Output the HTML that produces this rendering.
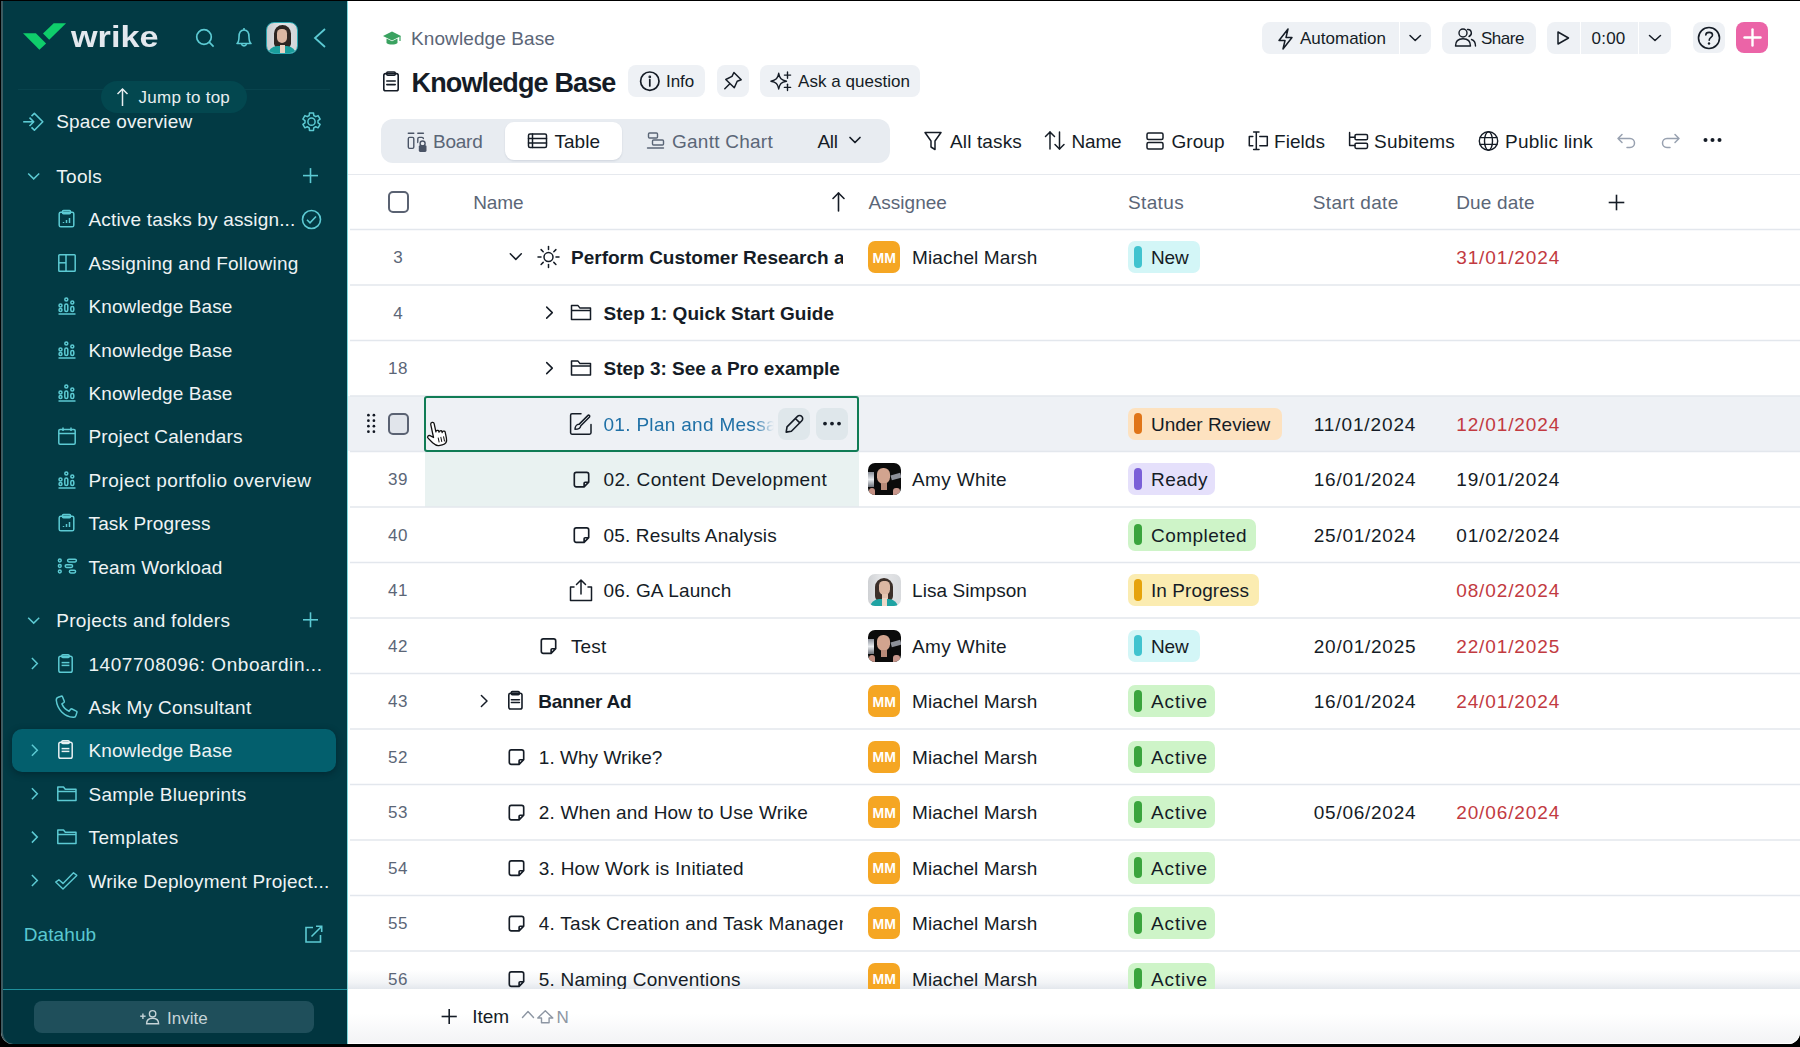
<!DOCTYPE html><html><head><meta charset="utf-8"><style>
*{box-sizing:border-box}
html,body{margin:0;padding:0;width:1800px;height:1047px;overflow:hidden;background:#000;font-family:"Liberation Sans",sans-serif}
.t{position:absolute;line-height:1;white-space:nowrap}
.a{position:absolute}
svg{position:absolute;overflow:visible}
</style></head><body><div class="a" style="left:1px;top:1px;width:1799px;height:1043px;background:#fff;border-radius:0 0 12px 12px;overflow:hidden"></div><div class="a" style="left:1px;top:1px;width:347px;height:1043px;background:#023a44;border-radius:0 0 0 12px;border-left:2px solid #3d5a60"></div><div class="a" style="left:347px;top:1px;width:1px;height:1043px;background:#7fd6dc"></div><svg width="1800" height="1047" style="left:0;top:0"><polygon points="23,33.3 35.9,33.3 46.1,43.6 39.4,49.8" fill="#0fce6b"/><polygon points="43,33.6 53.7,23.2 66.1,23.2 49.2,39.8" fill="#0fce6b"/></svg><div class="t" style="left:71px;top:22.5px;font-size:29px;font-weight:bold;color:#e3e8ee;letter-spacing:0px;transform:scaleX(1.18);transform-origin:0 0">wrike</div><svg width="1800" height="1047" style="left:0;top:0"><g fill="none" stroke="#5ccad3" stroke-width="1.7"><circle cx="204" cy="37" r="7.3"/><line x1="209.2" y1="42.2" x2="213.6" y2="46.6"/></g></svg><svg width="1800" height="1047" style="left:0;top:0"><g fill="none" stroke="#5ccad3" stroke-width="1.6" stroke-linejoin="round"><path d="M237,43.5 L237,43.5 C238.8,42 239,40 239,37 C239,32.5 241,30 244,30 C247,30 249,32.5 249,37 C249,40 249.2,42 251,43.5 Z"/><path d="M241.5,44 a2.6,2.6 0 0 0 5,0"/><line x1="244" y1="28" x2="244" y2="30"/></g></svg><div class="a" style="left:266px;top:21.5px;width:31.5px;height:32.5px;border-radius:8px;border:1.5px solid #2aa7b1;background:linear-gradient(90deg,#c9cbce,#e4e5e7 45%,#d3d5d8);overflow:hidden"><div class="a" style="left:6.5px;top:2.5px;width:17px;height:24px;border-radius:9px 9px 6px 6px;background:#2e2622"></div><div class="a" style="left:10px;top:6px;width:10px;height:14px;border-radius:5px 5px 6px 6px;background:#dcb7a2"></div><div class="a" style="left:1px;top:23px;width:28px;height:9px;border-radius:9px 9px 0 0;background:#1a9e9c"></div><div class="a" style="left:12.5px;top:22.5px;width:5px;height:9px;background:#ead3c3"></div></div><svg width="1800" height="1047" style="left:0;top:0"><polyline points="325,29 315,38 325,47" fill="none" stroke="#5ccad3" stroke-width="1.8"/></svg><div class="a" style="left:18px;top:89px;width:312px;height:1px;background:#08434d"></div><div class="a" style="left:101px;top:81px;width:146px;height:32px;border-radius:16px;background:#03474f"></div><svg width="1800" height="1047" style="left:0;top:0"><g fill="none" stroke="#e8eef0" stroke-width="1.5"><line x1="122.5" y1="89" x2="122.5" y2="106"/><polyline points="117.5,94 122.5,89 127.5,94"/></g></svg><div class="t" style="left:138.6px;top:88.6px;font-size:17px;color:#e8eef0;letter-spacing:0.24px;">Jump to top</div><svg width="1800" height="1047" style="left:0;top:0"><g fill="none" stroke="#5ccad3" stroke-width="1.6" stroke-linejoin="round"><path d="M31.5,116.2 L34.4,113.4 L42.8,121.8 L34.4,130.2 L31.5,127.4"/><line x1="23.2" y1="121.8" x2="33.5" y2="121.8"/><polyline points="29.5,117.6 33.7,121.8 29.5,126"/></g></svg><div class="t" style="left:56.2px;top:112.3px;font-size:19px;color:#eef3f4;letter-spacing:0.14px;">Space overview</div><svg width="1800" height="1047" style="left:0;top:0"><g fill="none" stroke="#5ccad3" stroke-width="1.5" stroke-linejoin="round"><circle cx="311.5" cy="121.7" r="3.6"/><path d="M309.24,115.50 L309.48,112.93 L313.52,112.93 L313.76,115.50 L315.74,116.64 L318.08,115.56 L320.11,119.07 L318.00,120.55 L318.00,122.85 L320.11,124.33 L318.08,127.84 L315.74,126.76 L313.76,127.90 L313.52,130.47 L309.48,130.47 L309.24,127.90 L307.26,126.76 L304.92,127.84 L302.89,124.33 L305.00,122.85 L305.00,120.55 L302.89,119.07 L304.92,115.56 L307.26,116.64 Z"/></g></svg><svg width="1800" height="1047" style="left:0;top:0"><polyline points="28.2,173.5 33.7,178.9 39.2,173.5" fill="none" stroke="#5ccad3" stroke-width="1.5"/></svg><div class="t" style="left:56.2px;top:166.6px;font-size:19px;color:#eef3f4;letter-spacing:0.33px;">Tools</div><svg width="1800" height="1047" style="left:0;top:0"><g stroke="#5ccad3" stroke-width="1.6"><line x1="303.0" y1="175.6" x2="318.0" y2="175.6"/><line x1="310.5" y1="168.1" x2="310.5" y2="183.1"/></g></svg><svg width="20" height="20" style="left:57.5px;top:210.3px"><g fill="none" stroke="#5ccad3" stroke-width="1.5"><rect x="1.2" y="2.2" width="14.6" height="14.6" rx="1.6"/><rect x="4.5" y="0.6" width="8" height="3.2" rx="1"/><line x1="5.5" y1="13" x2="5.5" y2="12"/><line x1="8.5" y1="13" x2="8.5" y2="10"/><line x1="11.5" y1="13" x2="11.5" y2="8"/></g></svg><div class="t" style="left:88.5px;top:210.3px;font-size:19px;color:#eef3f4;letter-spacing:0.17px;">Active tasks by assign...</div><svg width="20" height="20" style="left:57.5px;top:253.7px"><g fill="none" stroke="#5ccad3" stroke-width="1.5"><rect x="0.8" y="0.8" width="16.4" height="16.4" rx="0.8"/><line x1="8" y1="0.8" x2="8" y2="17.2"/><line x1="0.8" y1="8.8" x2="8" y2="8.8"/></g></svg><div class="t" style="left:88.5px;top:253.7px;font-size:19px;color:#eef3f4;letter-spacing:0.22px;">Assigning and Following</div><svg width="20" height="20" style="left:57.5px;top:297.1px"><g fill="none" stroke="#5ccad3" stroke-width="1.5"><circle cx="2.5" cy="8.5" r="1.5"/><circle cx="2.5" cy="13" r="1.5"/><rect x="6.8" y="7" width="3" height="7.5" rx="1.5"/><circle cx="8.3" cy="2.5" r="1.5"/><rect x="12.8" y="9.5" width="3" height="5" rx="1.5"/><circle cx="14.3" cy="5.5" r="1.5"/><line x1="0.5" y1="17" x2="17.5" y2="17"/></g></svg><div class="t" style="left:88.5px;top:297.1px;font-size:19px;color:#eef3f4;letter-spacing:0.10px;">Knowledge Base</div><svg width="20" height="20" style="left:57.5px;top:340.5px"><g fill="none" stroke="#5ccad3" stroke-width="1.5"><circle cx="2.5" cy="8.5" r="1.5"/><circle cx="2.5" cy="13" r="1.5"/><rect x="6.8" y="7" width="3" height="7.5" rx="1.5"/><circle cx="8.3" cy="2.5" r="1.5"/><rect x="12.8" y="9.5" width="3" height="5" rx="1.5"/><circle cx="14.3" cy="5.5" r="1.5"/><line x1="0.5" y1="17" x2="17.5" y2="17"/></g></svg><div class="t" style="left:88.5px;top:340.5px;font-size:19px;color:#eef3f4;letter-spacing:0.10px;">Knowledge Base</div><svg width="20" height="20" style="left:57.5px;top:383.9px"><g fill="none" stroke="#5ccad3" stroke-width="1.5"><circle cx="2.5" cy="8.5" r="1.5"/><circle cx="2.5" cy="13" r="1.5"/><rect x="6.8" y="7" width="3" height="7.5" rx="1.5"/><circle cx="8.3" cy="2.5" r="1.5"/><rect x="12.8" y="9.5" width="3" height="5" rx="1.5"/><circle cx="14.3" cy="5.5" r="1.5"/><line x1="0.5" y1="17" x2="17.5" y2="17"/></g></svg><div class="t" style="left:88.5px;top:383.9px;font-size:19px;color:#eef3f4;letter-spacing:0.10px;">Knowledge Base</div><svg width="20" height="20" style="left:57.5px;top:427.3px"><g fill="none" stroke="#5ccad3" stroke-width="1.5"><rect x="0.8" y="2.5" width="16.4" height="14.7" rx="1.2"/><line x1="0.8" y1="6.5" x2="17.2" y2="6.5"/><line x1="5" y1="0.5" x2="5" y2="4"/><line x1="13" y1="0.5" x2="13" y2="4"/></g></svg><div class="t" style="left:88.5px;top:427.3px;font-size:19px;color:#eef3f4;letter-spacing:0.18px;">Project Calendars</div><svg width="20" height="20" style="left:57.5px;top:470.7px"><g fill="none" stroke="#5ccad3" stroke-width="1.5"><circle cx="2.5" cy="8.5" r="1.5"/><circle cx="2.5" cy="13" r="1.5"/><rect x="6.8" y="7" width="3" height="7.5" rx="1.5"/><circle cx="8.3" cy="2.5" r="1.5"/><rect x="12.8" y="9.5" width="3" height="5" rx="1.5"/><circle cx="14.3" cy="5.5" r="1.5"/><line x1="0.5" y1="17" x2="17.5" y2="17"/></g></svg><div class="t" style="left:88.5px;top:470.7px;font-size:19px;color:#eef3f4;letter-spacing:0.41px;">Project portfolio overview</div><svg width="20" height="20" style="left:57.5px;top:514.1px"><g fill="none" stroke="#5ccad3" stroke-width="1.5"><rect x="1.2" y="2.2" width="14.6" height="14.6" rx="1.6"/><rect x="4.5" y="0.6" width="8" height="3.2" rx="1"/><line x1="5.5" y1="13" x2="5.5" y2="12"/><line x1="8.5" y1="13" x2="8.5" y2="10"/><line x1="11.5" y1="13" x2="11.5" y2="8"/></g></svg><div class="t" style="left:88.5px;top:514.1px;font-size:19px;color:#eef3f4;letter-spacing:0.13px;">Task Progress</div><svg width="20" height="20" style="left:57.5px;top:557.5px"><g fill="none" stroke="#5ccad3" stroke-width="1.5"><circle cx="1.8" cy="2.5" r="1.4"/><circle cx="1.8" cy="8" r="1.4"/><circle cx="1.8" cy="13.5" r="1.4"/><rect x="9.6" y="1.2" width="8.8" height="2.7" rx="1.35"/><rect x="7.2" y="6.7" width="7.4" height="2.7" rx="1.35"/><rect x="11.4" y="12.2" width="6.2" height="2.7" rx="1.35"/></g></svg><div class="t" style="left:88.5px;top:557.5px;font-size:19px;color:#eef3f4;letter-spacing:0.18px;">Team Workload</div><svg width="1800" height="1047" style="left:0;top:0"><g fill="none" stroke="#5ccad3" stroke-width="1.6"><circle cx="311.5" cy="219.5" r="9"/><polyline points="307,219.8 310,222.8 316,216.5"/></g></svg><svg width="1800" height="1047" style="left:0;top:0"><polyline points="28.2,617.7 33.7,623.1 39.2,617.7" fill="none" stroke="#5ccad3" stroke-width="1.5"/></svg><div class="t" style="left:56.2px;top:611.0px;font-size:19px;color:#eef3f4;letter-spacing:0.31px;">Projects and folders</div><svg width="1800" height="1047" style="left:0;top:0"><g stroke="#5ccad3" stroke-width="1.6"><line x1="303.0" y1="619.8" x2="318.0" y2="619.8"/><line x1="310.5" y1="612.3" x2="310.5" y2="627.3"/></g></svg><div class="a" style="left:12px;top:729px;width:324px;height:43px;border-radius:10px;background:#035f6d;box-shadow:0 2px 7px rgba(0,20,26,.45)"></div><svg width="1800" height="1047" style="left:0;top:0"><polyline points="31.9,658.0 37.3,663.5 31.9,669.0" fill="none" stroke="#5ccad3" stroke-width="1.5"/></svg><svg width="20" height="20" style="left:57.0px;top:653.5px"><g fill="none" stroke="#5ccad3" stroke-width="1.5"><rect x="1.8" y="2.2" width="13.4" height="16" rx="1.8"/><rect x="4.8" y="0.8" width="7.4" height="2.8" rx="1"/><line x1="4.6" y1="8.6" x2="12.4" y2="8.6"/><line x1="4.6" y1="11.4" x2="12.4" y2="11.4"/></g></svg><div class="t" style="left:88.5px;top:654.5px;font-size:19px;color:#eef3f4;letter-spacing:0.55px;">1407708096: Onboardin...</div><svg width="20" height="20" style="left:55.8px;top:696.3px"><g fill="none" stroke="#5ccad3" stroke-width="1.5"><path d="M2.2,1.2 L5.2,0.2 C5.8,0 6.3,0.3 6.5,0.8 L8.3,5.2 C8.5,5.7 8.3,6.2 7.9,6.5 L5.9,7.9 C7.3,11.3 9.6,13.7 13.1,15.2 L14.6,13.3 C14.9,12.9 15.5,12.8 16,13 L20.3,15.1 C20.8,15.3 21.1,15.9 20.9,16.4 L20,19.4 C19.7,20.6 18.6,21.5 17.3,21.3 C8.2,20.5 1.2,13.4 0.3,4.3 C0.2,2.9 0.9,1.6 2.2,1.2 Z" stroke-linejoin="round"/></g></svg><div class="t" style="left:88.5px;top:697.9px;font-size:19px;color:#eef3f4;letter-spacing:0.27px;">Ask My Consultant</div><svg width="1800" height="1047" style="left:0;top:0"><polyline points="31.9,744.8 37.3,750.3 31.9,755.8" fill="none" stroke="#5ccad3" stroke-width="1.5"/></svg><svg width="20" height="20" style="left:57px;top:740.3px"><g fill="none" stroke="#e8f0f2" stroke-width="1.5"><rect x="1.8" y="2.2" width="13.4" height="16" rx="1.8"/><rect x="4.8" y="0.8" width="7.4" height="2.8" rx="1"/><line x1="4.6" y1="8.6" x2="12.4" y2="8.6"/><line x1="4.6" y1="11.4" x2="12.4" y2="11.4"/></g></svg><div class="t" style="left:88.5px;top:741.3px;font-size:19px;color:#eef3f4;letter-spacing:0.10px;">Knowledge Base</div><svg width="1800" height="1047" style="left:0;top:0"><polyline points="31.9,788.2 37.3,793.7 31.9,799.2" fill="none" stroke="#5ccad3" stroke-width="1.5"/></svg><svg width="20" height="20" style="left:57.0px;top:784.7px"><g fill="none" stroke="#5ccad3" stroke-width="1.5"><path d="M0.8 2 L6.5 2 L8.3 4.3 L19 4.3 L19 15.5 L0.8 15.5 Z" stroke-linejoin="round"/><line x1="0.8" y1="6.5" x2="19" y2="6.5"/></g></svg><div class="t" style="left:88.5px;top:784.7px;font-size:19px;color:#eef3f4;letter-spacing:0.23px;">Sample Blueprints</div><svg width="1800" height="1047" style="left:0;top:0"><polyline points="31.9,831.6 37.3,837.1 31.9,842.6" fill="none" stroke="#5ccad3" stroke-width="1.5"/></svg><svg width="20" height="20" style="left:57.0px;top:828.1px"><g fill="none" stroke="#5ccad3" stroke-width="1.5"><path d="M0.8 2 L6.5 2 L8.3 4.3 L19 4.3 L19 15.5 L0.8 15.5 Z" stroke-linejoin="round"/><line x1="0.8" y1="6.5" x2="19" y2="6.5"/></g></svg><div class="t" style="left:88.5px;top:828.1px;font-size:19px;color:#eef3f4;letter-spacing:0.38px;">Templates</div><svg width="1800" height="1047" style="left:0;top:0"><polyline points="31.9,875.0 37.3,880.5 31.9,886.0" fill="none" stroke="#5ccad3" stroke-width="1.5"/></svg><svg width="20" height="20" style="left:57.0px;top:871.5px"><g fill="none" stroke="#5ccad3" stroke-width="1.5"><polygon points="-1.3,10.1 1.9,7.8 6,11.4 16.5,0.7 19.8,3.4 6,16.9" stroke-width="1.4" stroke-linejoin="round"/></g></svg><div class="t" style="left:88.5px;top:871.5px;font-size:19px;color:#eef3f4;letter-spacing:0.22px;">Wrike Deployment Project...</div><div class="t" style="left:23.7px;top:925.1px;font-size:19px;color:#5ac8d1;letter-spacing:0.10px;">Datahub</div><svg width="1800" height="1047" style="left:0;top:0"><g fill="none" stroke="#5ccad3" stroke-width="1.6"><path d="M313,927.5 L306,927.5 L306,942 L320.5,942 L320.5,935"/><line x1="311.5" y1="936.5" x2="321.5" y2="926.5"/><polyline points="316,926.3 321.7,926.3 321.7,932"/></g></svg><div class="a" style="left:3px;top:988.5px;width:344px;height:1px;background:#1f8f9b"></div><div class="a" style="left:3px;top:989.5px;width:344px;height:53.5px;background:#01353f;border-radius:0 0 0 12px"></div><div class="a" style="left:34px;top:1001px;width:280px;height:32px;border-radius:8px;background:#1f4f5b"></div><svg width="1800" height="1047" style="left:0;top:0"><g fill="none" stroke="#c6d4d8" stroke-width="1.4"><circle cx="152.6" cy="1013.8" r="3.2"/><path d="M146.6,1023.8 C146.6,1019.6 149.2,1018.2 152.6,1018.2 C156,1018.2 158.6,1019.6 158.6,1023.8 Z"/><line x1="140.2" y1="1016.2" x2="145.6" y2="1016.2"/><line x1="142.9" y1="1013.5" x2="142.9" y2="1018.9"/></g></svg><div class="t" style="left:167.0px;top:1009.5px;font-size:17px;color:#c6d4d8;letter-spacing:0.03px;">Invite</div><svg width="1800" height="1047" style="left:0;top:0"><path d="M383,36 L392,31.5 L401,36 L392,40.5 Z" fill="#3aa260"/><path d="M386.5,38.5 L386.5,43 C389,45 395,45 397.5,43 L397.5,38.5 L392,41.3 Z" fill="#3aa260"/><line x1="400" y1="36" x2="400" y2="41" stroke="#3aa260" stroke-width="1.2"/></svg><div class="t" style="left:411.0px;top:29.0px;font-size:19px;color:#5b6677;letter-spacing:0.10px;">Knowledge Base</div><svg width="1800" height="1047" style="left:0;top:0"><g fill="none" stroke="#151c26" stroke-width="1.6" stroke-linecap="round" stroke-linejoin="round" ><path d="M385.6,73.6 H396.4 Q398.2,73.6 398.2,75.4 V89 Q398.2,90.8 396.4,90.8 H385.6 Q383.8,90.8 383.8,89 V75.4 Q383.8,73.6 385.6,73.6 Z"/><rect x="386.8" y="72" width="8.4" height="3.2" rx="1"/><line x1="386.8" y1="81" x2="395.2" y2="81"/><line x1="386.8" y1="84.6" x2="395.2" y2="84.6"/></g></svg><div class="t" style="left:411.5px;top:69.5px;font-size:27px;color:#151c26;font-weight:bold;letter-spacing:-0.86px;">Knowledge Base</div><div class="a" style="left:628.0px;top:65.0px;width:77.0px;height:32.0px;background:#eef1f5;border-radius:8px;"></div><svg width="1800" height="1047" style="left:0;top:0"><g fill="none" stroke="#151c26" stroke-width="1.7" stroke-linecap="round" stroke-linejoin="round" ><circle cx="649.8" cy="81.2" r="9.2"/><line x1="649.8" y1="79.6" x2="649.8" y2="86"/><circle cx="649.8" cy="76.9" r="0.5" fill="#151c26"/></g></svg><div class="t" style="left:666.0px;top:73.0px;font-size:17px;color:#151c26;letter-spacing:-0.09px;">Info</div><div class="a" style="left:717.0px;top:65.0px;width:32.0px;height:32.0px;background:#eef1f5;border-radius:8px;"></div><svg width="1800" height="1047" style="left:0;top:0"><g fill="none" stroke="#151c26" stroke-width="1.5" stroke-linecap="round" stroke-linejoin="round" ><path d="M733.9,72.5 L741.2,79.8 L737.2,81.3 L734.3,87.8 L725.8,79.5 L732,76.3 Z M729.6,84 L724.8,88.8"/></g></svg><div class="a" style="left:760.0px;top:65.0px;width:160.0px;height:32.0px;background:#eef1f5;border-radius:8px;"></div><svg width="1800" height="1047" style="left:0;top:0"><g fill="none" stroke="#151c26" stroke-width="1.4" stroke-linecap="round" stroke-linejoin="round" ><path d="M778.7,73.3 C779.6,78.5 781.3,80.3 786.5,81.2 C781.3,82.1 779.6,83.9 778.7,89 C777.8,83.9 776.1,82.1 770.9,81.2 C776.1,80.3 777.8,78.5 778.7,73.3 Z"/><line x1="787.5" y1="72" x2="787.5" y2="78.2"/><line x1="784.4" y1="75.1" x2="790.6" y2="75.1"/><line x1="787.5" y1="84.3" x2="787.5" y2="90.5"/><line x1="784.4" y1="87.4" x2="790.6" y2="87.4"/></g></svg><div class="t" style="left:798.0px;top:73.0px;font-size:17px;color:#151c26;letter-spacing:0.04px;">Ask a question</div><div class="a" style="left:1262.0px;top:22.0px;width:169.0px;height:32.0px;background:#eef1f5;border-radius:8px;"></div><div class="a" style="left:1399.0px;top:22.0px;width:1.2px;height:32.0px;background:#ffffff;border-radius:0px;"></div><svg width="1800" height="1047" style="left:0;top:0"><g fill="none" stroke="#151c26" stroke-width="1.5" stroke-linecap="round" stroke-linejoin="round" ><path d="M1288,29 L1279,40.5 L1285,40.5 L1283,49 L1292,37.5 L1286,37.5 Z"/></g></svg><div class="t" style="left:1300.0px;top:30.0px;font-size:17px;color:#151c26;letter-spacing:0.00px;">Automation</div><svg width="1800" height="1047" style="left:0;top:0"><g fill="none" stroke="#151c26" stroke-width="1.5" stroke-linecap="round" stroke-linejoin="round" ><polyline points="1410,35.5 1415.2,40.5 1420.5,35.5"/></g></svg><div class="a" style="left:1442.0px;top:22.0px;width:94.0px;height:32.0px;background:#eef1f5;border-radius:8px;"></div><svg width="1800" height="1047" style="left:0;top:0"><g fill="none" stroke="#151c26" stroke-width="1.4" stroke-linecap="round" stroke-linejoin="round" ><circle cx="1463" cy="33" r="4"/><path d="M1455.5,46 C1455.5,41 1458.5,38.8 1463,38.8 C1467.5,38.8 1470.5,41 1470.5,46 Z"/><path d="M1467.5,29.5 C1471.5,29 1473,34.5 1469,36.5 M1471.5,39.5 C1474.5,40.5 1475.5,43 1475.5,46"/></g></svg><div class="t" style="left:1481.0px;top:30.0px;font-size:17px;color:#151c26;letter-spacing:-0.47px;">Share</div><div class="a" style="left:1547.0px;top:22.0px;width:124.0px;height:32.0px;background:#eef1f5;border-radius:8px;"></div><div class="a" style="left:1580.0px;top:22.0px;width:1.2px;height:32.0px;background:#ffffff;border-radius:0px;"></div><div class="a" style="left:1638.0px;top:22.0px;width:1.2px;height:32.0px;background:#ffffff;border-radius:0px;"></div><svg width="1800" height="1047" style="left:0;top:0"><g fill="none" stroke="#151c26" stroke-width="1.5" stroke-linecap="round" stroke-linejoin="round" ><path d="M1558,32 L1568.5,38 L1558,44 Z"/></g></svg><div class="t" style="left:1591.5px;top:30.0px;font-size:17px;color:#151c26;letter-spacing:0.23px;">0:00</div><svg width="1800" height="1047" style="left:0;top:0"><g fill="none" stroke="#151c26" stroke-width="1.5" stroke-linecap="round" stroke-linejoin="round" ><polyline points="1649.5,35.5 1655,40.5 1660.5,35.5"/></g></svg><div class="a" style="left:1693.0px;top:22.0px;width:32.0px;height:31.0px;background:#eef1f5;border-radius:8px;"></div><svg width="1800" height="1047" style="left:0;top:0"><g fill="none" stroke="#151c26" stroke-width="1.6" stroke-linecap="round" stroke-linejoin="round" ><circle cx="1709" cy="38" r="10.5"/><path d="M1705.8,35 C1705.8,31.5 1712.5,31.5 1712.5,35 C1712.5,37.5 1709.2,37.5 1709.2,40.3"/></g></svg><svg width="1800" height="1047" style="left:0;top:0"><circle cx="1709" cy="43.5" r="1.2" fill="#151c26"/></svg><div class="a" style="left:1736.0px;top:22.0px;width:32.0px;height:31.0px;background:#eb64a7;border-radius:8px;"></div><svg width="1800" height="1047" style="left:0;top:0"><g fill="none" stroke="#ffffff" stroke-width="2.4" stroke-linecap="round" stroke-linejoin="round" ><line x1="1744.5" y1="37.5" x2="1760.5" y2="37.5"/><line x1="1752.5" y1="29.5" x2="1752.5" y2="45.5"/></g></svg><div class="a" style="left:380.5px;top:119.0px;width:509.0px;height:43.5px;background:#e8ecf1;border-radius:12px;"></div><div class="a" style="left:505.0px;top:122.0px;width:117.0px;height:37.5px;background:#ffffff;border-radius:9px;box-shadow:0 1px 2px rgba(30,50,80,.12)"></div><svg width="1800" height="1047" style="left:0;top:0"><g fill="none" stroke="#4a5466" stroke-width="1.4" stroke-linecap="round" stroke-linejoin="round" ><line x1="408.3" y1="133.3" x2="413.8" y2="133.3"/><line x1="417.8" y1="133.3" x2="423.4" y2="133.3"/><rect x="408.3" y="137.4" width="5.5" height="11" rx="1.3"/><path d="M417.8,142.5 L417.8,138.7 C417.8,137.8 418.4,137.4 419.2,137.4 L422,137.4 C422.8,137.4 423.4,137.8 423.4,138.7"/></g></svg><svg width="1800" height="1047" style="left:0;top:0"><circle cx="422.6" cy="143.5" r="2.6" fill="none" stroke="#eaedf2" stroke-width="3.2"/><rect x="417.3" y="144" width="10.6" height="9.3" rx="2.2" fill="#eaedf2"/><circle cx="422.6" cy="143.5" r="2.5" fill="none" stroke="#4a5466" stroke-width="1.4"/><rect x="418.8" y="145.3" width="7.7" height="6.6" rx="1.3" fill="#4a5466"/></svg><div class="t" style="left:433.0px;top:131.5px;font-size:19px;color:#5b6677;letter-spacing:-0.24px;">Board</div><svg width="1800" height="1047" style="left:0;top:0"><g fill="none" stroke="#151c26" stroke-width="1.5" stroke-linecap="round" stroke-linejoin="round" ><rect x="528.5" y="134" width="18" height="13.5" rx="1.5"/><line x1="528.5" y1="138.5" x2="546.5" y2="138.5"/><line x1="528.5" y1="143" x2="546.5" y2="143"/><line x1="532.5" y1="134" x2="532.5" y2="147.5"/></g></svg><div class="t" style="left:554.5px;top:131.5px;font-size:19px;color:#151c26;letter-spacing:0.02px;">Table</div><svg width="1800" height="1047" style="left:0;top:0"><g fill="none" stroke="#5b6677" stroke-width="1.4" stroke-linecap="round" stroke-linejoin="round" ><rect x="648.5" y="133" width="9" height="5" rx="1"/><rect x="652.5" y="140" width="11" height="5" rx="1"/><line x1="647.5" y1="148" x2="663.5" y2="148"/></g></svg><div class="t" style="left:672.0px;top:131.5px;font-size:19px;color:#5b6677;letter-spacing:0.25px;">Gantt Chart</div><div class="t" style="left:817.5px;top:131.5px;font-size:19px;color:#151c26;letter-spacing:-0.37px;">All</div><svg width="1800" height="1047" style="left:0;top:0"><g fill="none" stroke="#151c26" stroke-width="1.7" stroke-linecap="round" stroke-linejoin="round" ><polyline points="850,137.5 855,142.5 860,137.5"/></g></svg><div class="t" style="left:950.0px;top:131.5px;font-size:19px;color:#151c26;letter-spacing:0.14px;">All tasks</div><div class="t" style="left:1071.5px;top:131.5px;font-size:19px;color:#151c26;letter-spacing:-0.17px;">Name</div><div class="t" style="left:1171.5px;top:131.5px;font-size:19px;color:#151c26;letter-spacing:0.04px;">Group</div><div class="t" style="left:1274.0px;top:131.5px;font-size:19px;color:#151c26;letter-spacing:0.05px;">Fields</div><div class="t" style="left:1374.0px;top:131.5px;font-size:19px;color:#151c26;letter-spacing:0.23px;">Subitems</div><div class="t" style="left:1505.0px;top:131.5px;font-size:19px;color:#151c26;letter-spacing:0.23px;">Public link</div><svg width="1800" height="1047" style="left:0;top:0"><g fill="none" stroke="#151c26" stroke-width="1.5" stroke-linecap="round" stroke-linejoin="round" ><path d="M925,132.5 L941,132.5 L935,141 L935,149.5 L931,147 L931,141 Z"/></g></svg><svg width="1800" height="1047" style="left:0;top:0"><g fill="none" stroke="#151c26" stroke-width="1.5" stroke-linecap="round" stroke-linejoin="round" ><line x1="1050" y1="132" x2="1050" y2="149"/><polyline points="1045.5,136.5 1050,132 1054.5,136.5"/><line x1="1059.5" y1="132" x2="1059.5" y2="149"/><polyline points="1055,144.5 1059.5,149 1064,144.5"/></g></svg><svg width="1800" height="1047" style="left:0;top:0"><g fill="none" stroke="#151c26" stroke-width="1.5" stroke-linecap="round" stroke-linejoin="round" ><rect x="1147" y="133" width="16" height="6.5" rx="1.5"/><rect x="1147" y="142.5" width="16" height="6.5" rx="1.5"/></g></svg><svg width="1800" height="1047" style="left:0;top:0"><g fill="none" stroke="#151c26" stroke-width="1.5" stroke-linecap="round" stroke-linejoin="round" ><path d="M1252.8,136.6 L1249.3,136.6 L1249.3,145.8 L1252.8,145.8 M1256.3,132 L1256.3,149.5 M1253.6,132 L1259,132 M1253.6,149.5 L1259,149.5 M1259.8,136.6 L1267.3,136.6 L1267.3,145.8 L1259.8,145.8"/></g></svg><svg width="1800" height="1047" style="left:0;top:0"><g fill="none" stroke="#151c26" stroke-width="1.5" stroke-linecap="round" stroke-linejoin="round" ><rect x="1355" y="134.5" width="12.5" height="5.3" rx="1.3"/><rect x="1355" y="143.2" width="12.5" height="5.2" rx="1.3"/><path d="M1349.6,132.6 L1349.6,145.6 L1355,145.6 M1349.6,137.2 L1355,137.2"/></g></svg><svg width="1800" height="1047" style="left:0;top:0"><g fill="none" stroke="#151c26" stroke-width="1.4" stroke-linecap="round" stroke-linejoin="round" ><circle cx="1488.5" cy="141" r="9.2"/><ellipse cx="1488.5" cy="141" rx="4" ry="9.2"/><path d="M1480.2,137.6 L1496.8,137.6 M1480.2,144.4 L1496.8,144.4"/></g></svg><svg width="1800" height="1047" style="left:0;top:0"><g fill="none" stroke="#98a1b0" stroke-width="1.5" stroke-linecap="round" stroke-linejoin="round" ><path d="M1622,134.5 L1618,138.5 L1622,142.5 M1618,138.5 L1630,138.5 C1636,138.5 1636,147.5 1630,147.5 L1627,147.5"/></g></svg><svg width="1800" height="1047" style="left:0;top:0"><g fill="none" stroke="#98a1b0" stroke-width="1.5" stroke-linecap="round" stroke-linejoin="round" ><path d="M1675,134.5 L1679,138.5 L1675,142.5 M1679,138.5 L1667,138.5 C1661,138.5 1661,147.5 1667,147.5 L1670,147.5"/></g></svg><svg width="1800" height="1047" style="left:0;top:0"><g fill="#151c26"><circle cx="1705.5" cy="140" r="2"/><circle cx="1712.5" cy="140" r="2"/><circle cx="1719.5" cy="140" r="2"/></g></svg><div class="a" style="left:348.0px;top:173.5px;width:1452.0px;height:1.5px;background:#e6e9ee;border-radius:0px;"></div><div class="a" style="left:387.5px;top:191px;width:21.4px;height:21.5px;border:2px solid #5a6272;border-radius:5px;background:#fff"></div><div class="t" style="left:473.2px;top:193.3px;font-size:19px;color:#5b6677;letter-spacing:-0.09px;">Name</div><svg width="1800" height="1047" style="left:0;top:0"><g fill="none" stroke="#151c26" stroke-width="1.6" stroke-linecap="round" stroke-linejoin="round" ><line x1="838.5" y1="193" x2="838.5" y2="211"/><polyline points="833,198.5 838.5,193 844,198.5"/></g></svg><div class="t" style="left:868.5px;top:193.3px;font-size:19px;color:#5b6677;letter-spacing:0.04px;">Assignee</div><div class="t" style="left:1128.0px;top:193.3px;font-size:19px;color:#5b6677;letter-spacing:0.36px;">Status</div><div class="t" style="left:1312.8px;top:193.3px;font-size:19px;color:#5b6677;letter-spacing:0.34px;">Start date</div><div class="t" style="left:1456.2px;top:193.3px;font-size:19px;color:#5b6677;letter-spacing:0.19px;">Due date</div><svg width="1800" height="1047" style="left:0;top:0"><g stroke="#151c26" stroke-width="1.6"><line x1="1608.7" y1="202.5" x2="1624.3" y2="202.5"/><line x1="1616.5" y1="194.7" x2="1616.5" y2="210.3"/></g></svg><div class="a" style="left:348.0px;top:395.8px;width:1452.0px;height:55.5px;background:#eef1f5;border-radius:0px;"></div><div class="a" style="left:424.7px;top:451.3px;width:434.0px;height:55.5px;background:#e9f2f1;border-radius:0px;"></div><svg width="1800" height="1047" style="left:0;top:0"><g stroke="#e3e7ed" stroke-width="1.6"><line x1="350" y1="229.50" x2="1800" y2="229.50"/><line x1="350" y1="285.00" x2="1800" y2="285.00"/><line x1="350" y1="340.50" x2="1800" y2="340.50"/><line x1="350" y1="396.00" x2="1800" y2="396.00"/><line x1="350" y1="451.50" x2="1800" y2="451.50"/><line x1="350" y1="507.00" x2="1800" y2="507.00"/><line x1="350" y1="562.50" x2="1800" y2="562.50"/><line x1="350" y1="618.00" x2="1800" y2="618.00"/><line x1="350" y1="673.50" x2="1800" y2="673.50"/><line x1="350" y1="729.00" x2="1800" y2="729.00"/><line x1="350" y1="784.50" x2="1800" y2="784.50"/><line x1="350" y1="840.00" x2="1800" y2="840.00"/><line x1="350" y1="895.50" x2="1800" y2="895.50"/><line x1="350" y1="951.00" x2="1800" y2="951.00"/></g></svg><div class="a" style="left:348px;top:970px;width:1452px;height:19px;background:linear-gradient(180deg,rgba(234,237,241,0) 0%,rgba(234,237,241,.6) 65%,rgba(226,230,236,.95) 100%)"></div><div class="t" style="left:393.2px;top:249.4px;font-size:17px;color:#5b6677;letter-spacing:0.05px;">3</div><svg width="1800" height="1047" style="left:0;top:0"><g fill="none" stroke="#151c26" stroke-width="1.5" stroke-linecap="round" stroke-linejoin="round" ><polyline points="510.3,253.8 515.8,259.4 521.3,253.8"/></g></svg><svg width="1800" height="1047" style="left:0;top:0"><g fill="none" stroke="#151c26" stroke-width="1.5" stroke-linecap="round" stroke-linejoin="round" ><circle cx="548.5" cy="257.1" r="4.5"/><line x1="556.0" y1="257.1" x2="559.0" y2="257.1"/><line x1="553.8" y1="262.4" x2="555.9" y2="264.5"/><line x1="548.5" y1="264.6" x2="548.5" y2="267.6"/><line x1="543.2" y1="262.4" x2="541.1" y2="264.5"/><line x1="541.0" y1="257.1" x2="538.0" y2="257.1"/><line x1="543.2" y1="251.7" x2="541.1" y2="249.6"/><line x1="548.5" y1="249.6" x2="548.5" y2="246.6"/><line x1="553.8" y1="251.7" x2="555.9" y2="249.6"/></g></svg><div class="a" style="left:571px;top:242.1px;width:272px;height:30px;overflow:hidden"><div class="t" style="left:0.0px;top:6.0px;font-size:19px;color:#151c26;font-weight:bold;letter-spacing:0.00px;">Perform Customer Research and Analysis</div></div><div class="a" style="left:868.3px;top:241.1px;width:32.0px;height:32.0px;background:#f5a623;border-radius:7px;"></div><div class="t" style="left:872.5px;top:250.6px;font-size:14px;color:#ffffff;font-weight:bold;letter-spacing:0.09px;">MM</div><div class="t" style="left:912.0px;top:248.1px;font-size:19px;color:#151c26;letter-spacing:0.14px;">Miachel Marsh</div><div class="a" style="left:1128.0px;top:241.1px;width:71.8px;height:32.0px;background:#d3f6f7;border-radius:7px;"></div><div class="a" style="left:1133.5px;top:246.2px;width:8.3px;height:21.5px;background:#40c3cf;border-radius:4px;"></div><div class="t" style="left:1151.0px;top:248.1px;font-size:19px;color:#151c26;letter-spacing:-0.17px;">New</div><div class="t" style="left:1456.2px;top:248.1px;font-size:19px;color:#c23a41;letter-spacing:0.89px;">31/01/2024</div><div class="t" style="left:393.2px;top:304.9px;font-size:17px;color:#5b6677;letter-spacing:0.05px;">4</div><svg width="1800" height="1047" style="left:0;top:0"><g fill="none" stroke="#151c26" stroke-width="1.5" stroke-linecap="round" stroke-linejoin="round" ><polyline points="546.7,307.1 552.3,312.6 546.7,318.1"/></g></svg><svg width="1800" height="1047" style="left:0;top:0"><g fill="none" stroke="#151c26" stroke-width="1.5" stroke-linecap="round" stroke-linejoin="round" ><path d="M571.5,305.6 L578.0,305.6 L580.0,308.1 L590.5,308.1 L590.5,319.6 L571.5,319.6 Z M571.5,310.6 L590.5,310.6"/></g></svg><div class="t" style="left:603.5px;top:303.6px;font-size:19px;color:#151c26;font-weight:bold;letter-spacing:0.06px;">Step 1: Quick Start Guide</div><div class="t" style="left:388.0px;top:360.4px;font-size:17px;color:#5b6677;letter-spacing:0.55px;">18</div><svg width="1800" height="1047" style="left:0;top:0"><g fill="none" stroke="#151c26" stroke-width="1.5" stroke-linecap="round" stroke-linejoin="round" ><polyline points="546.7,362.6 552.3,368.1 546.7,373.6"/></g></svg><svg width="1800" height="1047" style="left:0;top:0"><g fill="none" stroke="#151c26" stroke-width="1.5" stroke-linecap="round" stroke-linejoin="round" ><path d="M571.5,361.1 L578.0,361.1 L580.0,363.6 L590.5,363.6 L590.5,375.1 L571.5,375.1 Z M571.5,366.1 L590.5,366.1"/></g></svg><div class="t" style="left:603.5px;top:359.1px;font-size:19px;color:#151c26;font-weight:bold;letter-spacing:-0.01px;">Step 3: See a Pro example</div><div class="a" style="left:424.2px;top:395.7px;width:434.5px;height:56.1px;border:2.6px solid #107c55;border-radius:3px"></div><svg width="1800" height="1047" style="left:0;top:0"><g fill="#111722"><circle cx="368.4" cy="415.2" r="1.35"/><circle cx="373.9" cy="415.2" r="1.35"/><circle cx="368.4" cy="420.7" r="1.35"/><circle cx="373.9" cy="420.7" r="1.35"/><circle cx="368.4" cy="426.2" r="1.35"/><circle cx="373.9" cy="426.2" r="1.35"/><circle cx="368.4" cy="431.7" r="1.35"/><circle cx="373.9" cy="431.7" r="1.35"/></g></svg><div class="a" style="left:387.5px;top:413.1px;width:21.4px;height:21.5px;border:2px solid #5a6272;border-radius:5px;background:#e1e5eb"></div><svg width="1800" height="1047" style="left:0;top:0"><g fill="none" stroke="#151c26" stroke-width="1.5" stroke-linecap="round" stroke-linejoin="round" ><path d="M581,413.75 H572 Q570.6,413.75 570.6,415.15000000000003 V432.75 Q570.6,434.15000000000003 572,434.15000000000003 H589.5 Q591,434.15000000000003 591,432.75 V424.55"/><path d="M575,429.35 C575,426.85 576.5,424.35 579,424.35 L587.5,415.85 C588.7,414.35 590.5,415.75 589.3,417.25 L580.8,425.75 C580.5,428.05 578.5,429.35 575,429.35 Z"/></g></svg><div class="a" style="left:603.5px;top:408.6px;width:170px;height:30px;overflow:hidden;-webkit-mask-image:linear-gradient(90deg,#000 88%,transparent 100%)"><div class="t" style="left:0.0px;top:6.0px;font-size:19px;color:#1f70a6;letter-spacing:0.30px;">01. Plan and Messaging</div></div><div class="a" style="left:778.4px;top:408.1px;width:31.5px;height:31.5px;background:#dfe7eb;border-radius:8px;"></div><div class="a" style="left:816.4px;top:408.1px;width:31.5px;height:31.5px;background:#dfe7eb;border-radius:8px;"></div><svg width="1800" height="1047" style="left:0;top:0"><g fill="none" stroke="#151c26" stroke-width="1.6" stroke-linecap="round" stroke-linejoin="round" ><path d="M786.2,432.15000000000003 L787,426.85 L797.2,416.65000000000003 C798.6,415.25 800.6,415.25 801.8,416.45 C803,417.65000000000003 803,419.65000000000003 801.6,421.05 L791.4,431.25 Z M795.4,418.45 L799.8,422.85"/></g></svg><svg width="1800" height="1047" style="left:0;top:0"><g fill="#151c26"><circle cx="825" cy="423.6" r="1.9"/><circle cx="832" cy="423.6" r="1.9"/><circle cx="839" cy="423.6" r="1.9"/></g></svg><div class="a" style="left:1128.0px;top:407.6px;width:153.7px;height:32.0px;background:#fde2c0;border-radius:7px;"></div><div class="a" style="left:1133.5px;top:412.8px;width:8.3px;height:21.5px;background:#e07518;border-radius:4px;"></div><div class="t" style="left:1151.0px;top:414.6px;font-size:19px;color:#151c26;letter-spacing:-0.02px;">Under Review</div><div class="t" style="left:1313.8px;top:414.6px;font-size:19px;color:#151c26;letter-spacing:0.88px;">11/01/2024</div><div class="t" style="left:1456.2px;top:414.6px;font-size:19px;color:#c23a41;letter-spacing:0.89px;">12/01/2024</div><svg width="1800" height="1047" style="left:0;top:0"><g transform="translate(0,2.5) rotate(-12 438 432)"><path d="M433,420.5 C433,418.5 436.5,418.5 436.5,420.5 L436.5,429 C436.5,427.5 439.5,427.5 439.5,429 L439.5,430 C439.5,428.5 442.5,428.5 442.5,430 L442.5,431 C442.5,429.5 445.5,429.5 445.5,431 L445.5,437 C445.5,441 443.5,443 440,443 L436.5,443 C434,443 432.5,441 431,439 L427.5,433.5 C426.5,432 428.5,430.5 430,431.5 L433,434 Z" fill="#fff" stroke="#111" stroke-width="1.3" stroke-linejoin="round"/><line x1="437.5" y1="435" x2="437.5" y2="440" stroke="#111" stroke-width="1"/><line x1="440.2" y1="435" x2="440.2" y2="440" stroke="#111" stroke-width="1"/><line x1="443" y1="435" x2="443" y2="440" stroke="#111" stroke-width="1"/></g></svg><div class="t" style="left:388.0px;top:471.4px;font-size:17px;color:#5b6677;letter-spacing:0.55px;">39</div><svg width="1800" height="1047" style="left:0;top:0"><g fill="none" stroke="#151c26" stroke-width="1.65" stroke-linecap="round" stroke-linejoin="round" ><path d="M576.3,472.40000000000003 H586.7 Q588.7,472.40000000000003 588.7,474.40000000000003 V482.20000000000005 L584.1,486.8 H576.3 Q574.3,486.8 574.3,484.8 V474.40000000000003 Q574.3,472.40000000000003 576.3,472.40000000000003 Z M588.7,482.20000000000005 H585.1 Q584.1,482.20000000000005 584.1,483.20000000000005 V486.8"/></g></svg><div class="t" style="left:603.5px;top:470.1px;font-size:19px;color:#151c26;letter-spacing:0.35px;">02. Content Development</div><div class="a" style="left:868.4px;top:463.1px;width:32.4px;height:32.4px;border-radius:7px;overflow:hidden;background:#0b0b0b"><div class="a" style="left:0;top:9px;width:6px;height:15px;background:linear-gradient(180deg,#8a8f99,#e9ecef 50%,#6c7079)"></div><div class="a" style="left:23px;top:11px;width:10px;height:5px;background:#8d9099;transform:rotate(-15deg)"></div><div class="a" style="left:1px;top:25px;width:6px;height:8px;border-radius:3px 3px 0 0;background:#c49083"></div><div class="a" style="left:25px;top:25px;width:7px;height:8px;border-radius:3px 3px 0 0;background:#c8978c"></div><div class="a" style="left:8.5px;top:5px;width:13px;height:16px;border-radius:6.5px 6.5px 7px 7px;background:#d2a48f"></div><div class="a" style="left:12.5px;top:20px;width:6px;height:7px;background:#b88a78"></div></div><div class="t" style="left:912.0px;top:470.1px;font-size:19px;color:#151c26;letter-spacing:0.35px;">Amy White</div><div class="a" style="left:1128.0px;top:463.1px;width:86.5px;height:32.0px;background:#e5e0fb;border-radius:7px;"></div><div class="a" style="left:1133.5px;top:468.2px;width:8.3px;height:21.5px;background:#7a5fd8;border-radius:4px;"></div><div class="t" style="left:1151.0px;top:470.1px;font-size:19px;color:#151c26;letter-spacing:0.42px;">Ready</div><div class="t" style="left:1313.8px;top:470.1px;font-size:19px;color:#151c26;letter-spacing:0.74px;">16/01/2024</div><div class="t" style="left:1456.2px;top:470.1px;font-size:19px;color:#151c26;letter-spacing:0.89px;">19/01/2024</div><div class="t" style="left:388.0px;top:526.8px;font-size:17px;color:#5b6677;letter-spacing:0.55px;">40</div><svg width="1800" height="1047" style="left:0;top:0"><g fill="none" stroke="#151c26" stroke-width="1.65" stroke-linecap="round" stroke-linejoin="round" ><path d="M576.3,527.8999999999999 H586.7 Q588.7,527.8999999999999 588.7,529.8999999999999 V537.6999999999999 L584.1,542.3 H576.3 Q574.3,542.3 574.3,540.3 V529.8999999999999 Q574.3,527.8999999999999 576.3,527.8999999999999 Z M588.7,537.6999999999999 H585.1 Q584.1,537.6999999999999 584.1,538.6999999999999 V542.3"/></g></svg><div class="t" style="left:603.5px;top:525.5px;font-size:19px;color:#151c26;letter-spacing:0.17px;">05. Results Analysis</div><div class="a" style="left:1128.0px;top:518.5px;width:128.4px;height:32.0px;background:#cef4c8;border-radius:7px;"></div><div class="a" style="left:1133.5px;top:523.8px;width:8.3px;height:21.5px;background:#3aa43d;border-radius:4px;"></div><div class="t" style="left:1151.0px;top:525.5px;font-size:19px;color:#151c26;letter-spacing:0.46px;">Completed</div><div class="t" style="left:1313.8px;top:525.5px;font-size:19px;color:#151c26;letter-spacing:0.74px;">25/01/2024</div><div class="t" style="left:1456.2px;top:525.5px;font-size:19px;color:#151c26;letter-spacing:0.89px;">01/02/2024</div><div class="t" style="left:388.0px;top:582.3px;font-size:17px;color:#5b6677;letter-spacing:0.55px;">41</div><svg width="1800" height="1047" style="left:0;top:0"><g fill="none" stroke="#151c26" stroke-width="1.5" stroke-linecap="round" stroke-linejoin="round" ><path d="M574.0,587.0 L570.5,587.0 L570.5,600.5 L591.5,600.5 L591.5,587.0 M581.0,594.0 L581.0,580.0 M576.5,584.5 L581.0,580.0 L585.5,584.5 M588.0,587.0 L591.5,587.0 L591.5,587.0"/></g></svg><div class="t" style="left:603.5px;top:581.0px;font-size:19px;color:#151c26;letter-spacing:0.18px;">06. GA Launch</div><div class="a" style="left:868.4px;top:574.0px;width:32.4px;height:32.4px;border-radius:7px;overflow:hidden;background:linear-gradient(90deg,#cfd1d4,#e6e7e9 40%,#d8dadd)"><div class="a" style="left:7px;top:3.5px;width:18px;height:24px;border-radius:9px 9px 6px 6px;background:#3b2f29"></div><div class="a" style="left:11px;top:7px;width:10.5px;height:14px;border-radius:5px 5px 6px 6px;background:#dcb8a3"></div><div class="a" style="left:13.5px;top:20px;width:6px;height:8px;background:#e3c4b0"></div><div class="a" style="left:2px;top:24.5px;width:28px;height:9px;border-radius:9px 9px 0 0;background:#1fa3a3"></div><div class="a" style="left:14px;top:24px;width:5px;height:9px;background:#eed8c8"></div></div><div class="t" style="left:912.0px;top:581.0px;font-size:19px;color:#151c26;letter-spacing:0.08px;">Lisa Simpson</div><div class="a" style="left:1128.0px;top:574.0px;width:130.8px;height:32.0px;background:#fbecb1;border-radius:7px;"></div><div class="a" style="left:1133.5px;top:579.2px;width:8.3px;height:21.5px;background:#e6a30b;border-radius:4px;"></div><div class="t" style="left:1151.0px;top:581.0px;font-size:19px;color:#151c26;letter-spacing:0.08px;">In Progress</div><div class="t" style="left:1456.2px;top:581.0px;font-size:19px;color:#c23a41;letter-spacing:0.89px;">08/02/2024</div><div class="t" style="left:388.0px;top:637.8px;font-size:17px;color:#5b6677;letter-spacing:0.55px;">42</div><svg width="1800" height="1047" style="left:0;top:0"><g fill="none" stroke="#151c26" stroke-width="1.65" stroke-linecap="round" stroke-linejoin="round" ><path d="M543.3,638.8999999999999 H553.7 Q555.7,638.8999999999999 555.7,640.8999999999999 V648.6999999999999 L551.1,653.3 H543.3 Q541.3,653.3 541.3,651.3 V640.8999999999999 Q541.3,638.8999999999999 543.3,638.8999999999999 Z M555.7,648.6999999999999 H552.1 Q551.1,648.6999999999999 551.1,649.6999999999999 V653.3"/></g></svg><div class="t" style="left:571.0px;top:636.5px;font-size:19px;color:#151c26;letter-spacing:0.11px;">Test</div><div class="a" style="left:868.4px;top:629.5px;width:32.4px;height:32.4px;border-radius:7px;overflow:hidden;background:#0b0b0b"><div class="a" style="left:0;top:9px;width:6px;height:15px;background:linear-gradient(180deg,#8a8f99,#e9ecef 50%,#6c7079)"></div><div class="a" style="left:23px;top:11px;width:10px;height:5px;background:#8d9099;transform:rotate(-15deg)"></div><div class="a" style="left:1px;top:25px;width:6px;height:8px;border-radius:3px 3px 0 0;background:#c49083"></div><div class="a" style="left:25px;top:25px;width:7px;height:8px;border-radius:3px 3px 0 0;background:#c8978c"></div><div class="a" style="left:8.5px;top:5px;width:13px;height:16px;border-radius:6.5px 6.5px 7px 7px;background:#d2a48f"></div><div class="a" style="left:12.5px;top:20px;width:6px;height:7px;background:#b88a78"></div></div><div class="t" style="left:912.0px;top:636.5px;font-size:19px;color:#151c26;letter-spacing:0.35px;">Amy White</div><div class="a" style="left:1128.0px;top:629.5px;width:71.8px;height:32.0px;background:#d3f6f7;border-radius:7px;"></div><div class="a" style="left:1133.5px;top:634.8px;width:8.3px;height:21.5px;background:#40c3cf;border-radius:4px;"></div><div class="t" style="left:1151.0px;top:636.5px;font-size:19px;color:#151c26;letter-spacing:-0.17px;">New</div><div class="t" style="left:1313.8px;top:636.5px;font-size:19px;color:#151c26;letter-spacing:0.74px;">20/01/2025</div><div class="t" style="left:1456.2px;top:636.5px;font-size:19px;color:#c23a41;letter-spacing:0.89px;">22/01/2025</div><div class="t" style="left:388.0px;top:693.3px;font-size:17px;color:#5b6677;letter-spacing:0.55px;">43</div><svg width="1800" height="1047" style="left:0;top:0"><g fill="none" stroke="#151c26" stroke-width="1.5" stroke-linecap="round" stroke-linejoin="round" ><polyline points="481.4,695.5 487.0,701.0 481.4,706.5"/></g></svg><svg width="1800" height="1047" style="left:0;top:0"><g fill="none" stroke="#151c26" stroke-width="1.6" stroke-linecap="round" stroke-linejoin="round" ><path d="M510.6,693.2499999999999 H520.2 Q522,693.2499999999999 522,695.05 V707.2499999999999 Q522,709.05 520.2,709.05 H510.6 Q508.8,709.05 508.8,707.2499999999999 V695.05 Q508.8,693.2499999999999 510.6,693.2499999999999 Z"/><rect x="511.3" y="691.6499999999999" width="8" height="3" rx="1"/><line x1="511.4" y1="699.7499999999999" x2="519.4" y2="699.7499999999999"/><line x1="511.4" y1="702.55" x2="519.4" y2="702.55"/></g></svg><div class="t" style="left:538.2px;top:692.0px;font-size:19px;color:#151c26;font-weight:bold;letter-spacing:-0.24px;">Banner Ad</div><div class="a" style="left:868.3px;top:685.0px;width:32.0px;height:32.0px;background:#f5a623;border-radius:7px;"></div><div class="t" style="left:872.5px;top:694.5px;font-size:14px;color:#ffffff;font-weight:bold;letter-spacing:0.09px;">MM</div><div class="t" style="left:912.0px;top:692.0px;font-size:19px;color:#151c26;letter-spacing:0.14px;">Miachel Marsh</div><div class="a" style="left:1128.0px;top:685.0px;width:86.5px;height:32.0px;background:#cef4c8;border-radius:7px;"></div><div class="a" style="left:1133.5px;top:690.2px;width:8.3px;height:21.5px;background:#3aa43d;border-radius:4px;"></div><div class="t" style="left:1151.0px;top:692.0px;font-size:19px;color:#151c26;letter-spacing:0.88px;">Active</div><div class="t" style="left:1313.8px;top:692.0px;font-size:19px;color:#151c26;letter-spacing:0.74px;">16/01/2024</div><div class="t" style="left:1456.2px;top:692.0px;font-size:19px;color:#c23a41;letter-spacing:0.89px;">24/01/2024</div><div class="t" style="left:388.0px;top:748.8px;font-size:17px;color:#5b6677;letter-spacing:0.55px;">52</div><svg width="1800" height="1047" style="left:0;top:0"><g fill="none" stroke="#151c26" stroke-width="1.65" stroke-linecap="round" stroke-linejoin="round" ><path d="M511.3,749.8999999999999 H521.7 Q523.7,749.8999999999999 523.7,751.8999999999999 V759.6999999999999 L519.1,764.3 H511.3 Q509.3,764.3 509.3,762.3 V751.8999999999999 Q509.3,749.8999999999999 511.3,749.8999999999999 Z M523.7,759.6999999999999 H520.1 Q519.1,759.6999999999999 519.1,760.6999999999999 V764.3"/></g></svg><div class="t" style="left:538.8px;top:747.5px;font-size:19px;color:#151c26;letter-spacing:0.03px;">1. Why Wrike?</div><div class="a" style="left:868.3px;top:740.5px;width:32.0px;height:32.0px;background:#f5a623;border-radius:7px;"></div><div class="t" style="left:872.5px;top:750.0px;font-size:14px;color:#ffffff;font-weight:bold;letter-spacing:0.09px;">MM</div><div class="t" style="left:912.0px;top:747.5px;font-size:19px;color:#151c26;letter-spacing:0.14px;">Miachel Marsh</div><div class="a" style="left:1128.0px;top:740.5px;width:86.5px;height:32.0px;background:#cef4c8;border-radius:7px;"></div><div class="a" style="left:1133.5px;top:745.8px;width:8.3px;height:21.5px;background:#3aa43d;border-radius:4px;"></div><div class="t" style="left:1151.0px;top:747.5px;font-size:19px;color:#151c26;letter-spacing:0.88px;">Active</div><div class="t" style="left:388.0px;top:804.3px;font-size:17px;color:#5b6677;letter-spacing:0.55px;">53</div><svg width="1800" height="1047" style="left:0;top:0"><g fill="none" stroke="#151c26" stroke-width="1.65" stroke-linecap="round" stroke-linejoin="round" ><path d="M511.3,805.3999999999999 H521.7 Q523.7,805.3999999999999 523.7,807.3999999999999 V815.1999999999999 L519.1,819.8 H511.3 Q509.3,819.8 509.3,817.8 V807.3999999999999 Q509.3,805.3999999999999 511.3,805.3999999999999 Z M523.7,815.1999999999999 H520.1 Q519.1,815.1999999999999 519.1,816.1999999999999 V819.8"/></g></svg><div class="t" style="left:538.8px;top:803.0px;font-size:19px;color:#151c26;letter-spacing:0.16px;">2. When and How to Use Wrike</div><div class="a" style="left:868.3px;top:796.0px;width:32.0px;height:32.0px;background:#f5a623;border-radius:7px;"></div><div class="t" style="left:872.5px;top:805.5px;font-size:14px;color:#ffffff;font-weight:bold;letter-spacing:0.09px;">MM</div><div class="t" style="left:912.0px;top:803.0px;font-size:19px;color:#151c26;letter-spacing:0.14px;">Miachel Marsh</div><div class="a" style="left:1128.0px;top:796.0px;width:86.5px;height:32.0px;background:#cef4c8;border-radius:7px;"></div><div class="a" style="left:1133.5px;top:801.2px;width:8.3px;height:21.5px;background:#3aa43d;border-radius:4px;"></div><div class="t" style="left:1151.0px;top:803.0px;font-size:19px;color:#151c26;letter-spacing:0.88px;">Active</div><div class="t" style="left:1313.8px;top:803.0px;font-size:19px;color:#151c26;letter-spacing:0.74px;">05/06/2024</div><div class="t" style="left:1456.2px;top:803.0px;font-size:19px;color:#c23a41;letter-spacing:0.89px;">20/06/2024</div><div class="t" style="left:388.0px;top:859.8px;font-size:17px;color:#5b6677;letter-spacing:0.55px;">54</div><svg width="1800" height="1047" style="left:0;top:0"><g fill="none" stroke="#151c26" stroke-width="1.65" stroke-linecap="round" stroke-linejoin="round" ><path d="M511.3,860.8999999999999 H521.7 Q523.7,860.8999999999999 523.7,862.8999999999999 V870.6999999999999 L519.1,875.3 H511.3 Q509.3,875.3 509.3,873.3 V862.8999999999999 Q509.3,860.8999999999999 511.3,860.8999999999999 Z M523.7,870.6999999999999 H520.1 Q519.1,870.6999999999999 519.1,871.6999999999999 V875.3"/></g></svg><div class="t" style="left:538.8px;top:858.5px;font-size:19px;color:#151c26;letter-spacing:0.24px;">3. How Work is Initiated</div><div class="a" style="left:868.3px;top:851.5px;width:32.0px;height:32.0px;background:#f5a623;border-radius:7px;"></div><div class="t" style="left:872.5px;top:861.0px;font-size:14px;color:#ffffff;font-weight:bold;letter-spacing:0.09px;">MM</div><div class="t" style="left:912.0px;top:858.5px;font-size:19px;color:#151c26;letter-spacing:0.14px;">Miachel Marsh</div><div class="a" style="left:1128.0px;top:851.5px;width:86.5px;height:32.0px;background:#cef4c8;border-radius:7px;"></div><div class="a" style="left:1133.5px;top:856.8px;width:8.3px;height:21.5px;background:#3aa43d;border-radius:4px;"></div><div class="t" style="left:1151.0px;top:858.5px;font-size:19px;color:#151c26;letter-spacing:0.88px;">Active</div><div class="t" style="left:388.0px;top:915.3px;font-size:17px;color:#5b6677;letter-spacing:0.55px;">55</div><svg width="1800" height="1047" style="left:0;top:0"><g fill="none" stroke="#151c26" stroke-width="1.65" stroke-linecap="round" stroke-linejoin="round" ><path d="M511.3,916.3999999999999 H521.7 Q523.7,916.3999999999999 523.7,918.3999999999999 V926.1999999999999 L519.1,930.8 H511.3 Q509.3,930.8 509.3,928.8 V918.3999999999999 Q509.3,916.3999999999999 511.3,916.3999999999999 Z M523.7,926.1999999999999 H520.1 Q519.1,926.1999999999999 519.1,927.1999999999999 V930.8"/></g></svg><div class="a" style="left:538.8px;top:908.0px;width:304px;height:30px;overflow:hidden"><div class="t" style="left:0.0px;top:6.0px;font-size:19px;color:#151c26;letter-spacing:0.25px;">4. Task Creation and Task Management</div></div><div class="a" style="left:868.3px;top:907.0px;width:32.0px;height:32.0px;background:#f5a623;border-radius:7px;"></div><div class="t" style="left:872.5px;top:916.5px;font-size:14px;color:#ffffff;font-weight:bold;letter-spacing:0.09px;">MM</div><div class="t" style="left:912.0px;top:914.0px;font-size:19px;color:#151c26;letter-spacing:0.14px;">Miachel Marsh</div><div class="a" style="left:1128.0px;top:907.0px;width:86.5px;height:32.0px;background:#cef4c8;border-radius:7px;"></div><div class="a" style="left:1133.5px;top:912.2px;width:8.3px;height:21.5px;background:#3aa43d;border-radius:4px;"></div><div class="t" style="left:1151.0px;top:914.0px;font-size:19px;color:#151c26;letter-spacing:0.88px;">Active</div><div class="t" style="left:388.0px;top:970.8px;font-size:17px;color:#5b6677;letter-spacing:0.55px;">56</div><svg width="1800" height="1047" style="left:0;top:0"><g fill="none" stroke="#151c26" stroke-width="1.65" stroke-linecap="round" stroke-linejoin="round" ><path d="M511.3,971.8999999999999 H521.7 Q523.7,971.8999999999999 523.7,973.8999999999999 V981.6999999999999 L519.1,986.3 H511.3 Q509.3,986.3 509.3,984.3 V973.8999999999999 Q509.3,971.8999999999999 511.3,971.8999999999999 Z M523.7,981.6999999999999 H520.1 Q519.1,981.6999999999999 519.1,982.6999999999999 V986.3"/></g></svg><div class="t" style="left:538.8px;top:969.5px;font-size:19px;color:#151c26;letter-spacing:0.21px;">5. Naming Conventions</div><div class="a" style="left:868.3px;top:962.5px;width:32.0px;height:32.0px;background:#f5a623;border-radius:7px;"></div><div class="t" style="left:872.5px;top:972.0px;font-size:14px;color:#ffffff;font-weight:bold;letter-spacing:0.09px;">MM</div><div class="t" style="left:912.0px;top:969.5px;font-size:19px;color:#151c26;letter-spacing:0.14px;">Miachel Marsh</div><div class="a" style="left:1128.0px;top:962.5px;width:86.5px;height:32.0px;background:#cef4c8;border-radius:7px;"></div><div class="a" style="left:1133.5px;top:967.8px;width:8.3px;height:21.5px;background:#3aa43d;border-radius:4px;"></div><div class="t" style="left:1151.0px;top:969.5px;font-size:19px;color:#151c26;letter-spacing:0.88px;">Active</div><div class="a" style="left:348px;top:988.5px;width:1452px;height:55px;background:linear-gradient(180deg,#ffffff 0%,#ffffff 45%,#f2f3f5 100%);border-radius:0 0 12px 0;box-shadow:inset 0 -1px 0 #ffffff"></div><svg width="1800" height="1047" style="left:0;top:0"><g stroke="#151c26" stroke-width="1.6"><line x1="441.6" y1="1016.5" x2="456.8" y2="1016.5"/><line x1="449.2" y1="1008.9" x2="449.2" y2="1024.1"/></g></svg><div class="t" style="left:472.2px;top:1007.0px;font-size:19px;color:#151c26;letter-spacing:-0.04px;">Item</div><svg width="1800" height="1047" style="left:0;top:0"><g fill="none" stroke="#8d96a3" stroke-width="1.4" stroke-linecap="round" stroke-linejoin="round" ><polyline points="522.5,1017.5 528,1011.5 533.5,1017.5"/><path d="M545.3,1010.8 L537.8,1018 L541.5,1018 L541.5,1022.8 L549.1,1022.8 L549.1,1018 L552.8,1018 Z"/></g></svg><div class="t" style="left:556.5px;top:1009.0px;font-size:17px;color:#8d96a3;letter-spacing:0.22px;">N</div></body></html>
